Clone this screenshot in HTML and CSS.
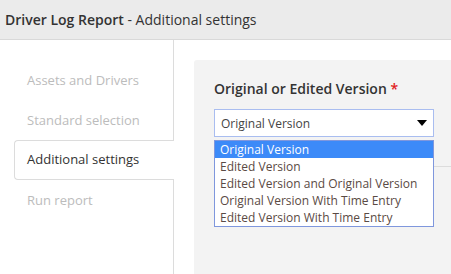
FILE: index.html
```html
<!DOCTYPE html>
<html lang="en">
<head>
    <meta charset="UTF-8">
    <title>Driver Log Report</title>
    <link rel="stylesheet" href="styles.css">
</head>
<body>

<div class="page-header">
    <strong>Driver Log Report</strong> - Additional settings
</div>

<div class="wizard">
    <ul class="wizard-steps">
        <li class="step">Assets and Drivers</li>
        <li class="step">Standard selection</li>
        <li class="step active">Additional settings</li>
        <li class="step">Run report</li>
    </ul>

    <div class="wizard-panel">
        <div class="field">
            <label class="field-label">Original or Edited Version <span class="required">*</span></label>
            <div class="select-box">
                <div class="select-value">
                    <span>Original Version</span>
                    <svg class="select-arrow" width="10" height="6" viewBox="0 0 10 6"><path d="M0 0 L10 0 L5 6 Z" fill="#000"/></svg>
                </div>
                <ul class="select-options">
                    <li class="option selected">Original Version</li>
                    <li class="option">Edited Version</li>
                    <li class="option">Edited Version and Original Version</li>
                    <li class="option">Original Version With Time Entry</li>
                    <li class="option">Edited Version With Time Entry</li>
                </ul>
            </div>
        </div>
    </div>
</div>

</body>
</html>
```

FILE: styles.css
```css
body {
    margin: 0;
    font-family: "Open Sans", Arial, sans-serif;
    color: #333;
    background: #fff;
    height: 274px;
    overflow: hidden;
}
.page-header {
    height: 39px;
    line-height: 39px;
    padding-left: 5px;
    background-color: #ebebeb;
    border-bottom: 1px solid #d9d9d9;
    font-size: 14px;
}
.page-header strong {
    font-weight: 600;
}
.wizard {
    display: flex;
    height: 234px;
}
.wizard-steps {
    list-style: none;
    margin: 0;
    padding: 20px 0 0 14px;
    width: 159px;
    border-right: 1px solid #dcdcdc;
    flex-shrink: 0;
}
.step {
    height: 40px;
    line-height: 40px;
    padding-left: 13px;
    font-size: 13px;
    color: #bcbcbc;
}
.step.active {
    height: 38px;
    line-height: 36px;
    color: #333;
    background: #fff;
    border: 1px solid #dcdcdc;
    border-right: none;
    border-radius: 4px 0 0 4px;
    margin-right: -1px;
    padding-left: 12px;
}
.wizard-panel {
    flex: 1;
    margin: 20px 0 0 20px;
    background-color: #f3f3f3;
    border-radius: 3px 0 0 0;
    padding: 20px 0 0 20px;
    position: relative;
}
.wizard-panel::after {
    content: "";
    position: absolute;
    left: 20px;
    right: 0;
    top: 106px;
    border-top: 1px solid #dcdcdc;
}
.field-label {
    display: block;
    font-size: 14px;
    font-weight: 600;
    line-height: 18px;
    margin-bottom: 11px;
}
.required {
    color: #e02020;
}
.select-box {
    position: relative;
    width: 220px;
    z-index: 1;
}
.select-value {
    height: 26px;
    padding: 0 6px;
    display: flex;
    align-items: center;
    justify-content: space-between;
    background: #fff;
    border: 1px solid #a9bdf0;
    font-size: 12px;
    color: #444;
}
.select-options {
    list-style: none;
    margin: 3px 0 0;
    padding: 0;
    background: #fff;
    border: 1px solid #7f97dd;
    width: 218px;
}
.option {
    height: 17px;
    line-height: 18px;
    padding-left: 5px;
    font-size: 12px;
    color: #5a4a44;
}
.option.selected {
    background-color: #3c8af8;
    color: #fff;
}
```
